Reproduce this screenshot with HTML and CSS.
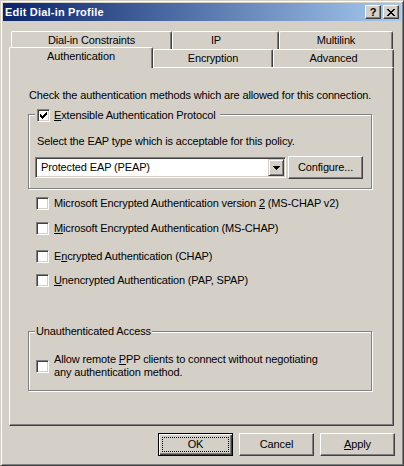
FILE: index.html
```html
<!DOCTYPE html>
<html lang="en">
<head>
<meta charset="utf-8">
<title>Edit Dial-in Profile</title>
<link rel="stylesheet" href="styles.css">
</head>
<body>
<div class="window">
  <div class="titlebar">
    <span class="title">Edit Dial-in Profile</span>
    <div class="cap-btns">
      <div class="cap-btn help">?</div>
      <div class="cap-btn close"><svg width="8" height="7" viewBox="0 0 8 7" shape-rendering="crispEdges"><path d="M0 0h2v1H0zM6 0h2v1H6zM1 1h2v1H1zM5 1h2v1H5zM2 2h4v1H2zM3 3h2v1H3zM2 4h4v1H2zM1 5h2v1H1zM5 5h2v1H5zM0 6h2v1H0zM6 6h2v1H6z" fill="#000"/></svg></div>
    </div>
  </div>
  <div class="client">
    <div class="tab-row back">
      <div class="tab t-dial">Dial-in Constraints</div>
      <div class="tab t-ip">IP</div>
      <div class="tab t-multi">Multilink</div>
    </div>
    <div class="tab-row front">
      <div class="tab sel t-auth">Authentication</div>
      <div class="tab t-enc">Encryption</div>
      <div class="tab t-adv">Advanced</div>
    </div>
    <div class="panel">
      <p class="intro">Check the authentication methods which are allowed for this connection.</p>
      <div class="group eap">
        <div class="legend">
          <span class="cb"><svg width="7" height="7" viewBox="0 0 7 7" shape-rendering="crispEdges"><path d="M6 0h1v1H6zM5 1h2v1H5zM0 2h1v1H0zM4 2h3v1H4zM0 3h2v1H0zM3 3h3v1H3zM0 4h5v1H0zM1 5h3v1H1zM2 6h1v1H2z" fill="#000"/></svg></span>
          <span class="label"><u>E</u>xtensible Authentication Protocol</span>
        </div>
        <p class="hint">Select the EAP type which is acceptable for this policy.</p>
        <div class="eap-row">
          <div class="combo">
            <span class="combo-text">Protected EAP (PEAP)</span>
            <span class="drop"><svg width="7" height="4" viewBox="0 0 7 4" shape-rendering="crispEdges"><path d="M0 0h7v1H0zM1 1h5v1H1zM2 2h3v1H2zM3 3h1v1H3z" fill="#000"/></svg></span>
          </div>
          <div class="btn">Confi<u>g</u>ure...</div>
        </div>
      </div>
      <div class="check-row r1"><span class="cb"></span><span class="label">Microsoft Encrypted Authentication version <u>2</u> (MS-CHAP v2)</span></div>
      <div class="check-row r2"><span class="cb"></span><span class="label"><u>M</u>icrosoft Encrypted Authentication (MS-CHAP)</span></div>
      <div class="check-row r3"><span class="cb"></span><span class="label">E<u>n</u>crypted Authentication (CHAP)</span></div>
      <div class="check-row r4"><span class="cb"></span><span class="label"><u>U</u>nencrypted Authentication (PAP, SPAP)</span></div>
      <div class="group unauth">
        <div class="legend text-legend">Unauthenticated Access</div>
        <div class="check-row r5"><span class="cb"></span><span class="label">Allow remote <u>P</u>PP clients to connect without negotiating<br>any authentication method.</span></div>
      </div>
    </div>
    <div class="buttons">
      <div class="btn default"><span class="focus">OK</span></div>
      <div class="btn">Cancel</div>
      <div class="btn"><u>A</u>pply</div>
    </div>
  </div>
</div>
</body>
</html>
```
FILE: styles.css
```css
* { box-sizing: border-box; }
html, body { margin: 0; padding: 0; }
body {
  width: 404px;
  height: 466px;
  overflow: hidden;
  background: #D4D0C8;
  font-family: "Liberation Sans", Arial, sans-serif;
  font-size: 11px;
  line-height: 13px;
  letter-spacing: -0.14px;
  color: #000;
}
p { margin: 0; }
u { text-decoration: underline; text-underline-offset: 1px; }

.window {
  width: 404px;
  height: 466px;
  background: #D4D0C8;
  border: 1px solid;
  border-color: #D4D0C8 #404040 #404040 #D4D0C8;
  box-shadow: inset 1px 1px 0 #fff, inset -1px -1px 0 #808080;
  padding: 2px;
  display: flex;
  flex-direction: column;
}

.titlebar {
  height: 18px;
  flex: none;
  display: flex;
  align-items: center;
  padding: 0 2px;
  background: linear-gradient(to right, #0A246A, #A6CAF0);
}
.title {
  flex: 1;
  color: #fff;
  font-weight: bold;
  font-size: 11px;
  letter-spacing: 0.2px;
}
.cap-btns { display: flex; gap: 2px; }
.cap-btn {
  width: 16px;
  height: 14px;
  background: #D4D0C8;
  border: 1px solid;
  border-color: #fff #404040 #404040 #fff;
  box-shadow: inset -1px -1px 0 #808080;
  display: flex;
  align-items: center;
  justify-content: center;
}
.cap-btn.help {
  font-weight: bold;
  font-size: 11px;
  line-height: 12px;
  letter-spacing: 0;
  padding-bottom: 1px;
}

.client {
  flex: 1;
  display: flex;
  flex-direction: column;
  padding: 10px 0 0 6px;
}

.tab-row { display: flex; height: 18px; flex: none; }
.tab-row.back { padding-left: 2px; }
.tab {
  height: 18px;
  background: #D4D0C8;
  border-top: 1px solid #fff;
  border-left: 1px solid #fff;
  border-right: 1px solid #404040;
  box-shadow: inset -1px 0 0 #808080;
  border-radius: 2px 2px 0 0;
  text-align: center;
  line-height: 16px;
  white-space: nowrap;
}
.t-dial { width: 161px; }
.t-ip { width: 107px; padding-right: 19px; }
.t-multi { width: 114px; }
.t-auth { width: 144px; }
.t-enc { width: 120px; }
.t-adv { width: 121px; }
.tab.sel {
  height: 21px;
  margin-top: -2px;
  position: relative;
  z-index: 1;
}

.panel {
  width: 385px;
  height: 359px;
  flex: none;
  border: 1px solid;
  border-color: #fff #404040 #404040 #fff;
  box-shadow: inset -1px -1px 0 #808080;
  padding-left: 18px;
  display: flex;
  flex-direction: column;
  align-items: flex-start;
}
.intro { margin-top: 21px; padding-left: 1px; }

.group {
  width: 344px;
  border: 1px solid #808080;
  box-shadow: 1px 1px 0 #fff, inset 1px 1px 0 #fff;
  display: flex;
  flex-direction: column;
  align-items: flex-start;
  flex: none;
}
.group.eap { height: 75px; margin-top: 12px; }
.group.unauth { height: 60px; margin-top: 44px; }

.legend {
  display: flex;
  align-items: center;
  gap: 4px;
  height: 13px;
  background: #D4D0C8;
}
.eap .legend { margin: -6px 0 0 6px; padding: 0 4px 0 2px; }
.text-legend { margin: -7px 0 0 6px; padding: 0 1px; }

.hint { margin-top: 13px; padding-left: 8px; }

.eap-row {
  display: flex;
  align-items: center;
  gap: 2px;
  margin: 8px 0 0 6px;
  height: 23px;
}

.cb {
  width: 13px;
  height: 13px;
  flex: none;
  background: #fff;
  border: 1px solid;
  border-color: #808080 #fff #fff #808080;
  box-shadow: inset 1px 1px 0 #404040, inset -1px -1px 0 #D4D0C8;
  display: flex;
  align-items: center;
  justify-content: center;
}
.cb svg { display: block; }

.combo {
  width: 251px;
  height: 21px;
  background: #fff;
  border: 1px solid;
  border-color: #808080 #fff #fff #808080;
  box-shadow: inset 1px 1px 0 #404040, inset -1px -1px 0 #D4D0C8;
  padding: 1px 1px 1px 2px;
  display: flex;
  align-items: center;
}
.combo-text { flex: 1; padding-left: 3px; white-space: nowrap; }
.drop {
  width: 16px;
  height: 17px;
  flex: none;
  background: #D4D0C8;
  border: 1px solid;
  border-color: #D4D0C8 #404040 #404040 #D4D0C8;
  box-shadow: inset 1px 1px 0 #fff, inset -1px -1px 0 #808080;
  display: flex;
  align-items: center;
  justify-content: center;
}
.drop svg { display: block; }

.btn {
  width: 75px;
  height: 23px;
  flex: none;
  background: #D4D0C8;
  border: 1px solid;
  border-color: #fff #404040 #404040 #fff;
  box-shadow: inset -1px -1px 0 #808080;
  display: flex;
  align-items: center;
  justify-content: center;
  white-space: nowrap;
}
.btn.default {
  border-color: #000;
  box-shadow: inset 1px 1px 0 #fff, inset -1px -1px 0 #404040, inset -2px -2px 0 #808080;
  padding: 3px;
}
.focus {
  flex: 1;
  align-self: stretch;
  border: 1px dotted #000;
  display: flex;
  align-items: center;
  justify-content: center;
}

.check-row {
  display: flex;
  align-items: center;
  gap: 5px;
  margin-left: 8px;
  flex: none;
}
.r1 { margin-top: 8px; }
.r2 { margin-top: 12px; }
.r3 { margin-top: 15px; }
.r4 { margin-top: 11px; }
.unauth .check-row { margin: 15px 0 0 7px; }

.buttons {
  display: flex;
  justify-content: flex-end;
  gap: 6px;
  margin-top: 7px;
  padding-right: 6px;
}
```
